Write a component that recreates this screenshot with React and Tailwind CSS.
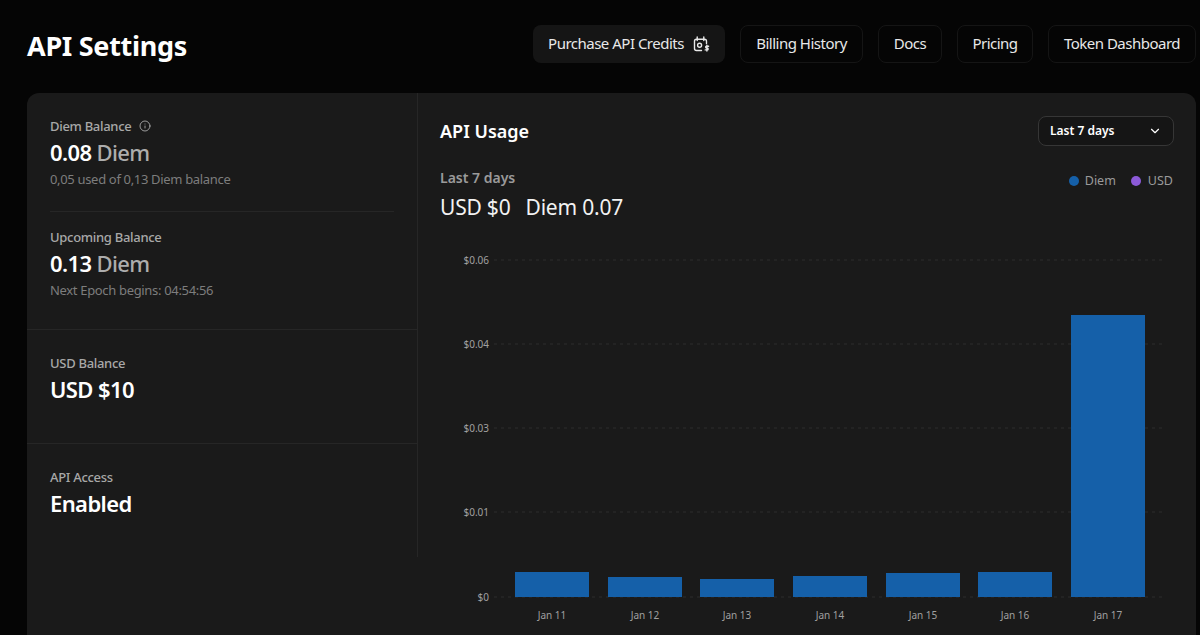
import { ChevronDown, Info } from 'lucide-react'

const font = { fontFamily: '"Noto Sans", "Open Sans", sans-serif' }

const navLinks = [
  { label: 'Billing History', width: 'w-[123px]' },
  { label: 'Docs', width: 'w-[64px]' },
  { label: 'Pricing', width: 'w-[76px]' },
  { label: 'Token Dashboard', width: 'w-[148px]' },
]

const bars = [
  { label: 'Jan 11', x: 515, top: 572 },
  { label: 'Jan 12', x: 608, top: 577 },
  { label: 'Jan 13', x: 700, top: 579 },
  { label: 'Jan 14', x: 793, top: 576 },
  { label: 'Jan 15', x: 886, top: 573 },
  { label: 'Jan 16', x: 978, top: 572 },
  { label: 'Jan 17', x: 1071, top: 315 },
]

const ticks = [
  { label: '$0.06', y: 260 },
  { label: '$0.04', y: 344 },
  { label: '$0.03', y: 428 },
  { label: '$0.01', y: 512 },
  { label: '$0', y: 597 },
]

function BasketIcon() {
  return (
    <svg width="18" height="18" viewBox="0 0 18 18" fill="none" stroke="#e8e8e8" strokeWidth="1.4" strokeLinecap="round" strokeLinejoin="round">
      <path d="M9.5 15.5H4.5c-1.2 0-2-.8-2-2V6.2c0-1.2.8-2 2-2h8c1.2 0 2 .8 2 2V8.5" />
      <path d="M5.2 2v3.6M11.8 2v3.6" />
      <circle cx="7.6" cy="10.2" r="2" />
      <path d="M16.6 11.2h-2.2c-1 0-1 1.8 0 1.8h1c1 0 1 1.9 0 1.9h-2.2M14.9 10.2v5.8" />
    </svg>
  )
}

function Stat({ label, info, value, unit, note, className }) {
  return (
    <div className={className}>
      <div className="flex items-center gap-2 h-5 text-[13px] leading-5 font-medium tracking-[-0.3px] text-[#a8a8a8]">
        {label}
        {info && <Info size={12} strokeWidth={1.5} className="text-[#c4c4c4]" />}
      </div>
      <div className="h-8 text-[22px] leading-8 font-semibold tracking-[-0.6px] text-white">
        {value}
        {unit && <span className="ml-[5px] font-medium text-[#adadad]">{unit}</span>}
      </div>
      {note && <div className="mt-[1px] text-[13px] leading-5 tracking-[-0.33px] text-[#7d7d7d]">{note}</div>}
    </div>
  )
}

function UsageChart() {
  return (
    <svg viewBox="418 240 778 395" className="block w-[778px] h-[395px] shrink-0">
      {ticks.map((t) => (
        <g key={t.label}>
          <line x1="494" x2="1165" y1={t.y} y2={t.y} stroke="#2c2c2c" strokeDasharray="3 4" />
          <text x="489" y={t.y + 3.5} textAnchor="end" fontSize="10" fill="#a0a0a0">{t.label}</text>
        </g>
      ))}
      {bars.map((b) => (
        <g key={b.label}>
          <rect x={b.x} y={b.top} width="74" height={597 - b.top} fill="#1560a9" />
          <text x={b.x + 37} y="619" textAnchor="middle" fontSize="10" fill="#a0a0a0">{b.label}</text>
        </g>
      ))}
    </svg>
  )
}

export default function App() {
  return (
    <div style={font} className="w-[1200px] h-[635px] overflow-hidden bg-[#050505] text-white">
      <header className="flex items-center justify-between h-[93px] pl-[27px] pr-[4px] pb-[6px]">
        <h1 className="mt-[4px] text-[27px] font-bold tracking-[-0.3px] leading-9">API Settings</h1>
        <nav className="flex items-center gap-[15px] text-[15px] tracking-[-0.5px]">
          <button className="flex items-center justify-center gap-2 w-[192px] h-[38px] rounded-lg bg-[#151515] text-[#e8e8e8]">
            Purchase API Credits
            <BasketIcon />
          </button>
          {navLinks.map((l) => (
            <button key={l.label} className={`${l.width} h-[38px] rounded-lg border border-[#151515] text-[#e8e8e8]`}>
              {l.label}
            </button>
          ))}
        </nav>
      </header>

      <main className="flex ml-[27px] w-[1169px] h-[542px] rounded-t-xl bg-[#1a1a1a]">
        <aside className="w-[391px] shrink-0 h-[464px] border-r border-[#262626]">
          <div className="h-[237px] border-b border-[#262626] px-[23px] pt-[23px]">
            <Stat label="Diem Balance" info value="0.08" unit="Diem" note="0,05 used of 0,13 Diem balance" className="h-[96px] border-b border-[#262626]" />
            <Stat label="Upcoming Balance" value="0.13" unit="Diem" note="Next Epoch begins: 04:54:56" className="mt-[15px]" />
          </div>
          <div className="h-[114px] border-b border-[#262626] px-[23px] pt-[23px]">
            <Stat label="USD Balance" value="USD $10" />
          </div>
          <div className="px-[23px] pt-[23px]">
            <Stat label="API Access" value="Enabled" />
          </div>
        </aside>

        <section className="flex flex-col flex-1 min-w-0">
          <div className="flex items-center justify-between h-[76px] pl-[22px] pr-[22px]">
            <h2 className="text-lg font-semibold leading-7">API Usage</h2>
            <button className="flex items-center justify-between w-[136px] h-[30px] pl-[11px] pr-[11px] rounded-lg border border-[#363636] bg-[#151515] text-xs font-semibold">
              Last 7 days
              <ChevronDown size={14} />
            </button>
          </div>
          <div className="flex justify-between h-[71px] pl-[22px] pr-[23px]">
            <div className="-mt-px">
              <div className="text-sm leading-5 font-semibold text-[#9a9a9a]">Last 7 days</div>
              <div className="flex gap-[15px] mt-[5px] text-[21px] leading-7 tracking-[-0.2px] text-[#f2f2f2]">
                <span>USD $0</span>
                <span>Diem 0.07</span>
              </div>
            </div>
            <div className="flex items-center gap-[15px] h-5 mt-[2px] text-[12.5px] text-[#9a9a9a]">
              <span className="flex items-center gap-[6px]">
                <span className="w-[10px] h-[10px] rounded-full bg-[#1560a9]" />
                Diem
              </span>
              <span className="flex items-center gap-[7px]">
                <span className="w-[10px] h-[10px] rounded-full bg-[#8c5ad8]" />
                USD
              </span>
            </div>
          </div>
          <UsageChart />
        </section>
      </main>
    </div>
  )
}
